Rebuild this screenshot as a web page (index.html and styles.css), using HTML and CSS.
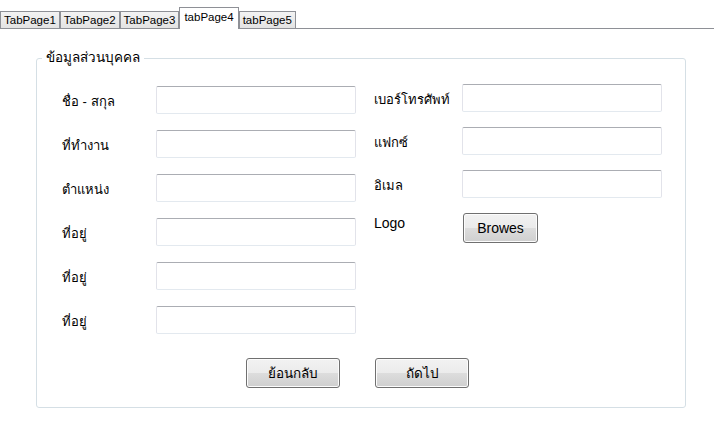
FILE: index.html
```html
<!DOCTYPE html>
<html lang="th">
<head>
    <meta charset="UTF-8">
    <title>tabPage4</title>
    <link rel="stylesheet" href="styles.css">
</head>
<body>
    <div class="tabs">
        <span class="tab">TabPage1</span>
        <span class="tab">TabPage2</span>
        <span class="tab">TabPage3</span>
        <span class="tab active">tabPage4</span>
        <span class="tab">tabPage5</span>
    </div>
    <div class="page">
        <fieldset class="group">
            <legend>ข้อมูลส่วนบุคคล</legend>
            <div class="cols">
                <div class="col col-left">
                    <div class="row"><span class="label">ชื่อ - สกุล</span><input type="text"></div>
                    <div class="row"><span class="label">ที่ทำงาน</span><input type="text"></div>
                    <div class="row"><span class="label">ตำแหน่ง</span><input type="text"></div>
                    <div class="row"><span class="label">ที่อยู่</span><input type="text"></div>
                    <div class="row"><span class="label">ที่อยู่</span><input type="text"></div>
                    <div class="row"><span class="label">ที่อยู่</span><input type="text"></div>
                </div>
                <div class="col col-right">
                    <div class="row"><span class="label">เบอร์โทรศัพท์</span><input type="text"></div>
                    <div class="row"><span class="label">แฟกซ์</span><input type="text"></div>
                    <div class="row"><span class="label">อิเมล</span><input type="text"></div>
                    <div class="row row-logo"><span class="label">Logo</span><button class="btn btn-small">Browes</button></div>
                </div>
            </div>
            <div class="actions">
                <button class="btn">ย้อนกลับ</button>
                <button class="btn">ถัดไป</button>
            </div>
        </fieldset>
    </div>
</body>
</html>
```

FILE: styles.css
```css
body {
    margin: 0;
    background: #ffffff;
    color: #000000;
    font-family: "Liberation Sans", "Noto Sans", sans-serif;
    font-size: 13px;
}
.tabs {
    display: flex;
    align-items: flex-end;
    height: 28px;
    border-bottom: 1px solid #8e9096;
}
.tab {
    box-sizing: border-box;
    height: 17px;
    padding: 0 3px;
    border: 1px solid #8e9096;
    border-bottom: none;
    background: linear-gradient(#f3f3f3, #e3e3e3);
    font-size: 11.5px;
    line-height: 16px;
    color: #000;
}
.tab.active {
    height: 22px;
    margin-bottom: -1px;
    padding: 0 4px;
    background: #ffffff;
    line-height: 18px;
}
.page {
    padding: 21px 0 0 36px;
}
.group {
    box-sizing: border-box;
    width: 650px;
    margin: 0;
    padding: 18px 0 19px 5px;
    border: 1px solid #d5dfe5;
    border-radius: 3px;
}
.group legend {
    padding: 0 4px;
    font-size: 13.5px;
    line-height: 16px;
}
.cols {
    display: flex;
    gap: 18px;
    margin-left: 20px;
}
.col {
    display: flex;
    flex-direction: column;
}
.col-left {
    gap: 16px;
    margin-top: 2px;
}
.col-right {
    gap: 15px;
}
.row {
    display: flex;
    align-items: center;
    height: 28px;
}
.col-left .label {
    width: 94px;
    padding-top: 3px;
}
.col-right .label {
    width: 88px;
    padding-top: 2px;
}
.row-logo {
    align-items: flex-start;
    height: 30px;
}
.row-logo .label {
    padding-top: 2px;
    font-size: 14px;
}
input {
    box-sizing: border-box;
    width: 200px;
    height: 28px;
    margin: 0;
    border: 1px solid;
    border-color: #abadb3 #e2e3ea #e3e9ef #e2e3ea;
    border-radius: 2px;
    background: #fff;
}
.btn {
    box-sizing: border-box;
    width: 94px;
    height: 30px;
    margin: 0;
    padding: 0;
    border: 1px solid #707070;
    border-radius: 3px;
    background: linear-gradient(#f2f2f2 0%, #ebebeb 50%, #dddddd 50%, #cfcfcf 100%);
    box-shadow: inset 0 0 0 1px #fcfcfc;
    font-family: inherit;
    font-size: 13.5px;
    color: #000;
}
.btn-small {
    width: 75px;
    margin-left: 1px;
    font-size: 14px;
}
.actions {
    display: flex;
    gap: 35px;
    margin: 24px 0 0 204px;
}
```
